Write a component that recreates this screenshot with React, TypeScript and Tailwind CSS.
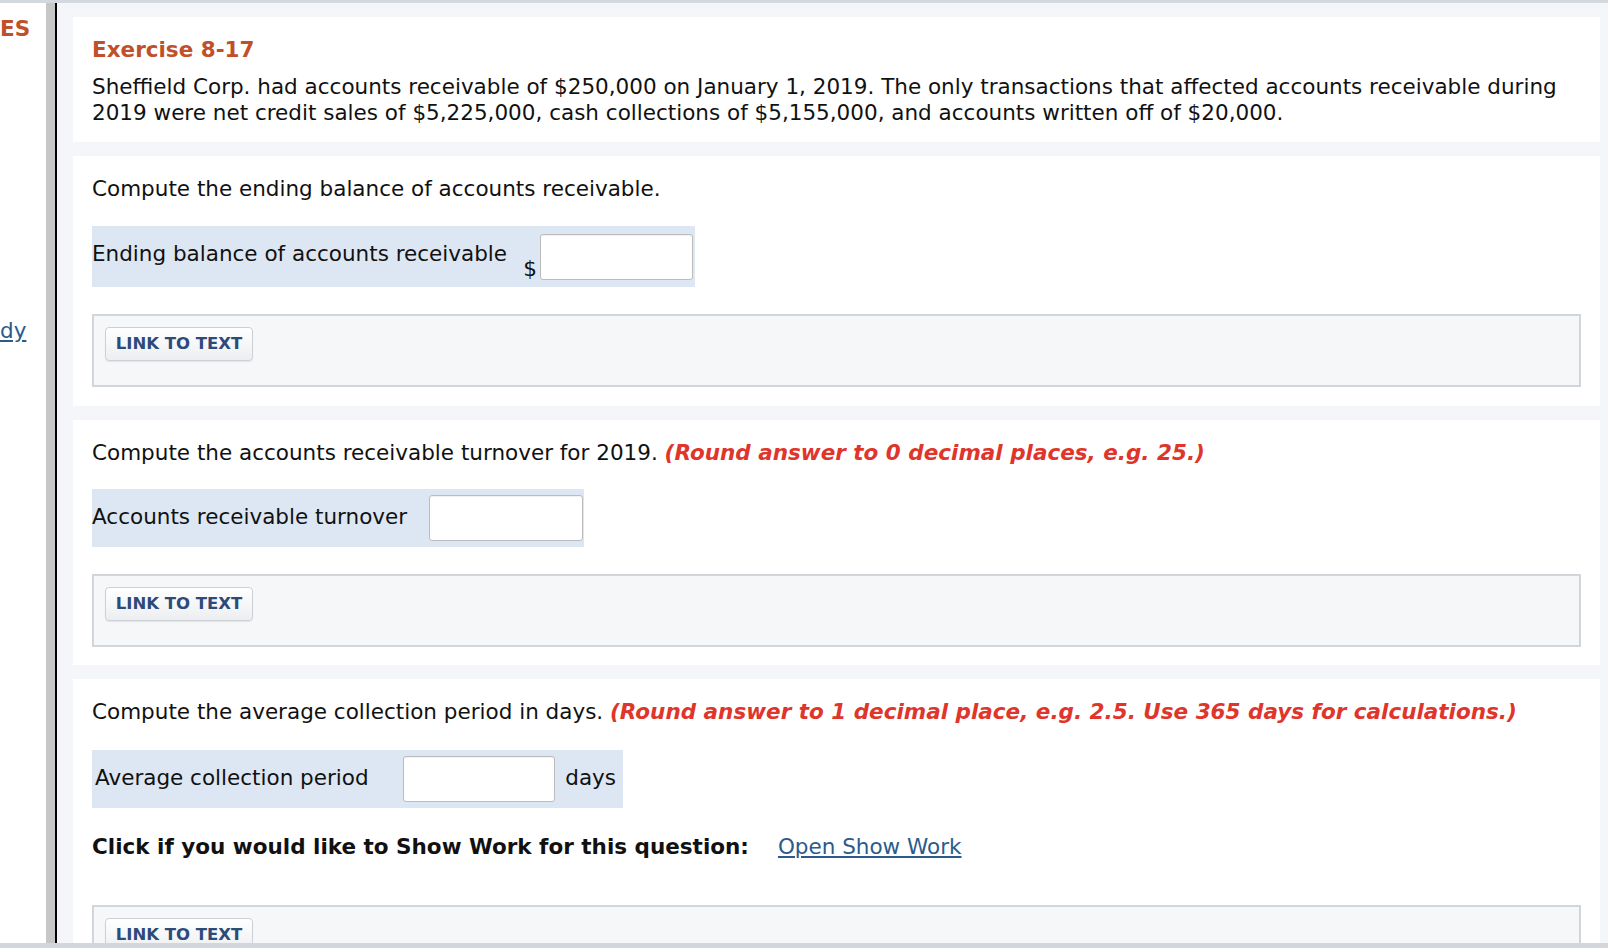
import React from 'react';

const font = "font-['DejaVu_Sans','Verdana',sans-serif]";

const LinkToText: React.FC = () => (
  <div className="h-[73px] border-2 border-[#d2d5da] bg-[#f6f7f9] pl-[11px] pt-[11px]">
    <button className="h-[34px] w-[148px] rounded-[4px] border border-[#cdd0d5] bg-gradient-to-b from-white to-[#eceef1] text-[16.5px] font-bold text-[#2d4a78] shadow-[0_1px_1px_rgba(0,0,0,0.08)]">
      LINK TO TEXT
    </button>
  </div>
);

const Input: React.FC<{ w: string }> = ({ w }) => (
  <input
    type="text"
    className={`h-[46px] ${w} rounded-[3px] border border-[#bcbcbc] bg-white shadow-[inset_0_1px_1px_rgba(0,0,0,0.06)] outline-none`}
  />
);

const Card: React.FC<{ children: React.ReactNode; className?: string }> = ({ children, className }) => (
  <section className={`bg-white px-[19px] ${className ?? ''}`}>{children}</section>
);

export default function App() {
  return (
    <div className={`flex h-[948px] w-[1608px] flex-col overflow-hidden text-[21.5px] leading-[26px] text-[#111] ${font}`}>
      <div className="h-[3px] shrink-0 bg-[#d4d8df]" />
      <div className="flex min-h-0 flex-1">
        <aside className="w-[46px] shrink-0 overflow-hidden bg-white">
          <div className="mt-[13px] font-bold text-[#c0502a]">ES</div>
          <a href="#" className="mt-[276px] block text-[#2a5b8c] underline">
            dy
          </a>
        </aside>
        <div className="w-[9px] shrink-0 bg-[#c7c7c7]" />
        <div className="w-[2px] shrink-0 bg-black" />
        <main className="flex flex-1 flex-col gap-[14px] bg-[#f4f6f9] pl-[16px] pr-[8px] pt-[14px]">
          <Card className="pb-[16px] pt-[20px]">
            <h2 className="font-bold text-[#c0502a]">Exercise 8-17</h2>
            <p className="mt-[11px]">
              Sheffield Corp. had accounts receivable of $250,000 on January 1, 2019. The only transactions that affected
              accounts receivable during 2019 were net credit sales of $5,225,000, cash collections of $5,155,000, and
              accounts written off of $20,000.
            </p>
          </Card>

          <Card className="pb-[19px] pt-[20px]">
            <p>Compute the ending balance of accounts receivable.</p>
            <div className="mt-[24px] flex h-[61px] w-[603px] items-center bg-[#dde7f3] pr-[2px]">
              <span className="mb-[5px]">Ending balance of accounts receivable</span>
              <span className="ml-auto mr-[3px] mt-[24px]">$</span>
              <Input w="w-[153px]" />
            </div>
            <div className="mt-[27px]">
              <LinkToText />
            </div>
          </Card>

          <Card className="pb-[18px] pt-[20px]">
            <p>
              Compute the accounts receivable turnover for 2019.{' '}
              <span className="font-bold italic text-[#e0352b]">(Round answer to 0 decimal places, e.g. 25.)</span>
            </p>
            <div className="mt-[23px] flex h-[58px] w-[492px] items-center bg-[#dde7f3] pr-[1px]">
              <span className="mb-[3px]">Accounts receivable turnover</span>
              <span className="ml-auto">
                <Input w="w-[154px]" />
              </span>
            </div>
            <div className="mt-[27px]">
              <LinkToText />
            </div>
          </Card>

          <Card className="flex-1 pt-[20px]">
            <p>
              Compute the average collection period in days.{' '}
              <span className="font-bold italic text-[#e0352b]">
                (Round answer to 1 decimal place, e.g. 2.5. Use 365 days for calculations.)
              </span>
            </p>
            <div className="mt-[25px] flex h-[58px] w-[531px] items-center bg-[#dde7f3] pl-[3px]">
              <span className="mb-[3px]">Average collection period</span>
              <span className="ml-auto">
                <Input w="w-[152px]" />
              </span>
              <span className="mb-[3px] ml-[10px] mr-[7px]">days</span>
            </div>
            <div className="mt-[26px] flex items-center">
              <span className="font-bold">Click if you would like to Show Work for this question:</span>
              <a href="#" className="ml-[29px] text-[#2a5b8c] underline">
                Open Show Work
              </a>
            </div>
            <div className="mt-[45px]">
              <LinkToText />
            </div>
          </Card>
        </main>
      </div>
      <div className="h-[5px] shrink-0 bg-[#d3d6db]" />
    </div>
  );
}
